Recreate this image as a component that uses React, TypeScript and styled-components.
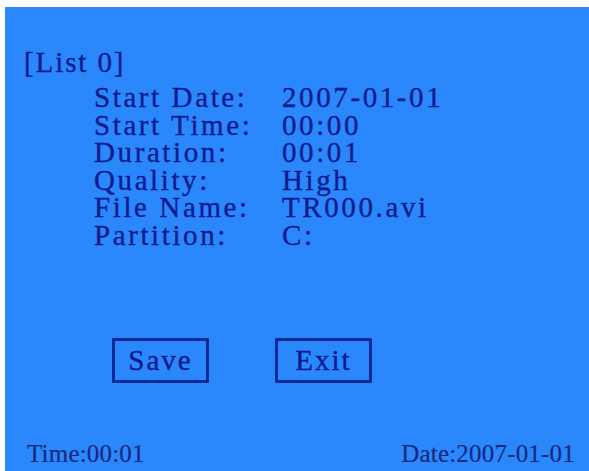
import { Fragment } from "react";
import { createGlobalStyle, styled } from "styled-components";

const GlobalStyle = createGlobalStyle`
  html, body {
    margin: 0;
    padding: 0;
    background: #ffffff;
  }
  body {
    font-family: "Liberation Serif", "Times New Roman", serif;
  }
`;

const Screen = styled.div`
  box-sizing: border-box;
  margin: 7px 0 0 5px;
  height: 464px;
  padding: 42px 14px 3px 19px;
  background: #2b87fc;
  color: #0c1b8e;
  display: flex;
  flex-direction: column;
  font-size: 29px;
  line-height: 27.6px;
  letter-spacing: 2.6px;
  -webkit-text-stroke: 0.35px currentColor;
`;

const Heading = styled.div`
  letter-spacing: 1.9px;
`;

const InfoGrid = styled.div`
  display: grid;
  grid-template-columns: 188px auto;
  margin: 7.4px 0 0 70px;
`;

const Cell = styled.div`
  white-space: nowrap;
`;

const ButtonRow = styled.div`
  display: flex;
  gap: 66px;
  margin: 88.4px 0 0 88px;
`;

const MenuButton = styled.button`
  box-sizing: border-box;
  width: 97px;
  height: 45px;
  padding: 0;
  border: 3px solid #0b2a94;
  border-radius: 1px;
  background: transparent;
  color: inherit;
  font: inherit;
  letter-spacing: 2px;
  display: flex;
  align-items: center;
  justify-content: center;
`;

const StatusBar = styled.div`
  margin-top: auto;
  display: flex;
  justify-content: space-between;
  padding-left: 3px;
  font-size: 25px;
  line-height: 29px;
  letter-spacing: 0.2px;
  color: #17297e;
  -webkit-text-stroke: 0.2px currentColor;
`;

const rows: [string, string][] = [
  ["Start Date:", "2007-01-01"],
  ["Start Time:", "00:00"],
  ["Duration:", "00:01"],
  ["Quality:", "High"],
  ["File Name:", "TR000.avi"],
  ["Partition:", "C:"],
];

export default function App() {
  return (
    <>
      <GlobalStyle />
      <Screen>
        <Heading>[List 0]</Heading>
        <InfoGrid>
          {rows.map(([label, value]) => (
            <Fragment key={label}>
              <Cell>{label}</Cell>
              <Cell>{value}</Cell>
            </Fragment>
          ))}
        </InfoGrid>
        <ButtonRow>
          <MenuButton>Save</MenuButton>
          <MenuButton>Exit</MenuButton>
        </ButtonRow>
        <StatusBar>
          <span>Time:00:01</span>
          <span>Date:2007-01-01</span>
        </StatusBar>
      </Screen>
    </>
  );
}
